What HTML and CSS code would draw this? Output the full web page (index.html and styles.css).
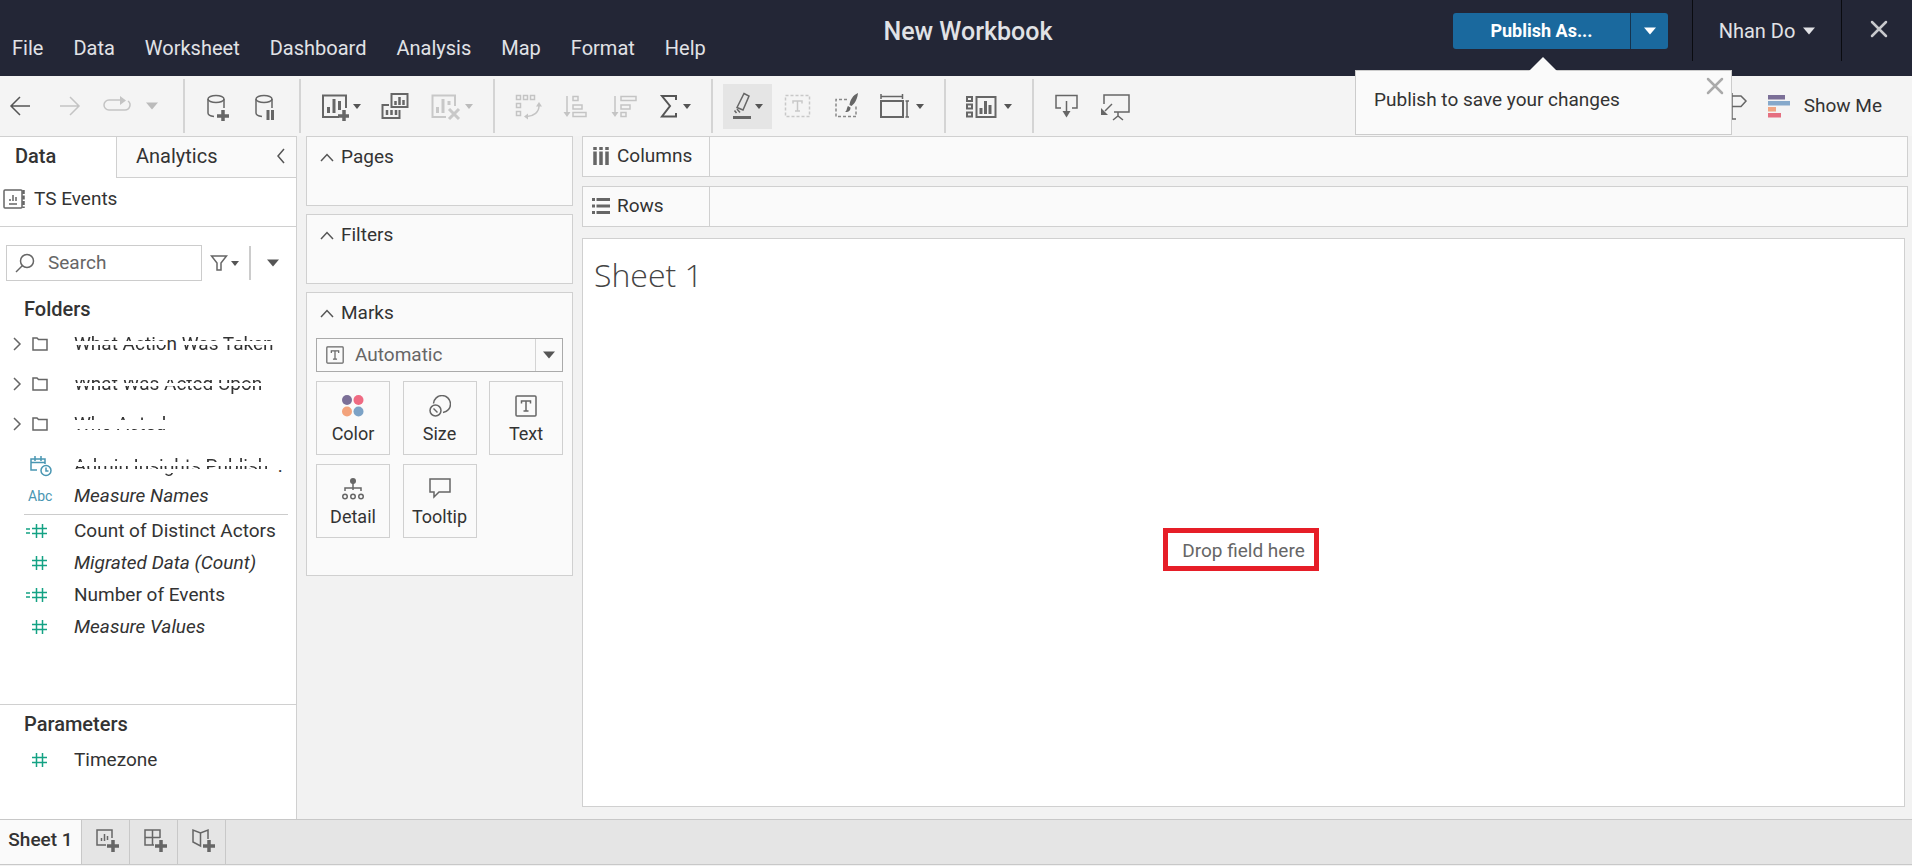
FILE: index.html
```html
<!DOCTYPE html>
<html lang="en">
<head>
<meta charset="utf-8">
<title>New Workbook</title>
<link rel="stylesheet" href="styles.css">
</head>
<body>
<svg width="0" height="0" class="defs" aria-hidden="true">
  <symbol id="caret" viewBox="0 0 10 6"><path d="M0 0h10L5 6z" fill="currentColor"/></symbol>
  <symbol id="chev" viewBox="0 0 16 10"><path d="M2 9l6-6.500 6 6.500" fill="none" stroke="#555" stroke-width="1.500"/></symbol>
  <symbol id="right" viewBox="0 0 10 16"><path d="M1 2l6 6-6 6" fill="none" stroke="#666" stroke-width="1.500"/></symbol>
  <symbol id="folder" viewBox="0 0 18 16"><path d="M2 14V2h4l1.500 1.500H16V14z" fill="none" stroke="#666" stroke-width="1.500"/></symbol>
  <symbol id="hash" viewBox="0 0 24 18"><path d="M12.500 2v14M18.500 2v14M8 6.500h15M8 11.500h15" fill="none" stroke="#14a284" stroke-width="1.500"/></symbol>
  <symbol id="eqhash" viewBox="0 0 24 18"><path d="M12.500 2v14M18.500 2v14M8 6.500h15M8 11.500h15M2 7h4M2 11h4" fill="none" stroke="#14a284" stroke-width="1.500"/></symbol>
  <symbol id="plus" viewBox="0 0 12 12"><path d="M6 0v12M0 6h12" stroke="#666" stroke-width="3.500"/></symbol>
  <symbol id="tbox" viewBox="0 0 22 22"><rect x="1" y="1" width="20" height="20" rx="1" fill="none" stroke="#666" stroke-width="1.500"/><path d="M6.500 8.500V6h9v2.500M11 6v10M8.500 16h5" fill="none" stroke="#666" stroke-width="1.500"/></symbol>
</svg>
<header class="top">
  <nav class="menu" aria-label="Main">
    <button>File</button><button>Data</button><button>Worksheet</button><button>Dashboard</button><button>Analysis</button><button>Map</button><button>Format</button><button>Help</button>
  </nav>
  <h1 class="title">New Workbook</h1>
  <div class="account">
    <div class="publish">
      <button class="publish-main">Publish As...</button><button class="publish-more" aria-label="Publish options"><svg width="12" height="8"><use href="#caret"/></svg></button>
      <div class="callout">
        <p>Publish to save your changes</p>
        <button aria-label="Dismiss"><svg width="18" height="18" viewBox="0 0 18 18"><path d="M2 2l14 14M16 2L2 16" stroke="#aaa" stroke-width="2.500" stroke-linecap="round"/></svg></button>
      </div>
    </div>
    <button class="user">Nhan Do<svg width="12" height="8"><use href="#caret"/></svg></button>
    <button class="close" aria-label="Close"><svg width="18" height="18" viewBox="0 0 18 18"><path d="M2 2l14 14M16 2L2 16" stroke="#c8c9cd" stroke-width="2.500" stroke-linecap="round"/></svg></button>
  </div>
</header>

<div class="toolbar" role="toolbar">
  <div class="group history">
    <button aria-label="Undo"><svg width="30" height="30" viewBox="0 0 30 30"><path d="M22 15H4M12 6l-9 9 9 9" fill="none" stroke="#555" stroke-width="1.500"/></svg></button>
    <button disabled aria-label="Redo"><svg width="24" height="30" viewBox="0 0 24 30"><path d="M2 15h18M12 6l9 9-9 9" fill="none" stroke="#c4c4c4" stroke-width="1.500"/></svg></button>
    <button disabled aria-label="Replay" class="split"><svg width="30" height="30" viewBox="0 0 30 30"><path d="M18 9H7a5 5 0 0 0 0 10h16a5 5 0 0 0 3-9" fill="none" stroke="#c4c4c4" stroke-width="1.500"/><path d="M18 5l6 4.500-6 4.500z" fill="#c4c4c4"/></svg><svg width="12" height="8"><use href="#caret"/></svg></button>
  </div>
  <div class="group">
    <button aria-label="New Data Source"><svg width="28" height="30" viewBox="0 0 28 30"><ellipse cx="11" cy="8" rx="8" ry="3.500" fill="none" stroke="#666" stroke-width="1.500"/><path d="M3 8v14c0 1.500 2 3 6 3.500M19 8v9" fill="none" stroke="#666" stroke-width="1.500"/><use href="#plus" x="12" y="19" width="12" height="12"/></svg></button>
    <button aria-label="Pause Auto Updates"><svg width="28" height="30" viewBox="0 0 28 30"><ellipse cx="11" cy="8" rx="8" ry="3.500" fill="none" stroke="#666" stroke-width="1.500"/><path d="M3 8v14c0 1.500 2 3 6 3.500M19 8v9" fill="none" stroke="#666" stroke-width="1.500"/><path d="M15 19v10M19.500 19v10" stroke="#666" stroke-width="3"/></svg></button>
  </div>
  <div class="group wide">
    <button aria-label="New Worksheet"><svg width="28" height="30" viewBox="0 0 28 30"><path d="M25 17V4.500H2V26h16" fill="none" stroke="#666" stroke-width="2"/><path d="M7.500 22v-6M13 22V8M18.500 19v-9" stroke="#666" stroke-width="3"/><use href="#plus" x="17" y="19" width="12" height="12"/></svg><svg width="8" height="5"><use href="#caret"/></svg></button>
    <button aria-label="Duplicate"><svg width="30" height="30" viewBox="0 0 30 30"><path d="M10.500 3h16v13h-16zM8 14H1.500v13h17v-8" fill="none" stroke="#666" stroke-width="2"/><path d="M14.500 14v-4M18.500 14V6M22.500 14V9M6 24v-5M10.500 24v-5M15 24v-5" stroke="#666" stroke-width="2.500"/></svg></button>
    <button disabled aria-label="Clear Sheet"><svg width="30" height="30" viewBox="0 0 30 30"><path d="M24 15V4.500H1.500V26H15" fill="none" stroke="#c8c8c8" stroke-width="2"/><path d="M6.500 22v-6M12 22V8M18 14v-4" stroke="#c8c8c8" stroke-width="3"/><path d="M18 18l10 10M28 18L18 28" stroke="#c8c8c8" stroke-width="3"/></svg><svg width="8" height="5"><use href="#caret"/></svg></button>
  </div>
  <div class="group wide">
    <button disabled aria-label="Swap Rows and Columns"><svg width="28" height="30" viewBox="0 0 28 30" fill="none" stroke="#c4c4c4" stroke-width="1.500"><path d="M1.500 4.500h4v4h-4zM8.500 4.500h4v4h-4zM15.500 4.500h4v4h-4zM1.500 12.500h4v4h-4zM1.500 20.500h4v4h-4z"/><path d="M24 15c0 6-5 10-12 10.500"/><path d="M21 15.500l3-4.500 3 4.500zM13 22.500L9 25.500l4 3z" fill="#c4c4c4" stroke="none"/></svg></button>
    <button disabled aria-label="Sort Ascending"><svg width="28" height="30" viewBox="0 0 28 30" fill="none" stroke="#c4c4c4" stroke-width="1.500"><path d="M4 5v18M10 5.500h5v4h-5zM10 14h9v4h-9zM10 21.500h13v4H10z"/><path d="M.5 21h7L4 26z" fill="#c4c4c4" stroke="none"/></svg></button>
    <button disabled aria-label="Sort Descending"><svg width="28" height="30" viewBox="0 0 28 30" fill="none" stroke="#c4c4c4" stroke-width="1.500"><path d="M4 5v18M10 5.500h15v4H10zM10 14h9v4h-9zM10 21.500h5v4h-5z"/><path d="M.5 21h7L4 26z" fill="#c4c4c4" stroke="none"/></svg></button>
    <button aria-label="Totals"><svg width="20" height="30" viewBox="0 0 20 30"><path d="M17 9V5H3l8 10-8 10.500h14V22" fill="none" stroke="#555" stroke-width="2"/></svg><svg width="8" height="5"><use href="#caret"/></svg></button>
  </div>
  <div class="group tight">
    <button aria-label="Highlight" class="active"><svg width="22" height="30" viewBox="0 0 22 30"><path d="M11 2.500l5 2.500-6 14-6-2.500z" fill="none" stroke="#666" stroke-width="1.500"/><path d="M4 18l3 3.500M1.500 19.500l2 2.500" stroke="#666" stroke-width="1.500"/><path d="M0 26.500h18" stroke="#666" stroke-width="3"/></svg><svg width="8" height="5"><use href="#caret"/></svg></button>
    <button disabled aria-label="Show Mark Labels"><svg width="28" height="30" viewBox="0 0 28 30" fill="none" stroke="#c8c8c8" stroke-width="1.500"><rect x="1.500" y="4.500" width="24" height="21" stroke-dasharray="3 2"/><path d="M9 12.500V10h9v2.500M13.500 10v10M11 20h5"/></svg></button>
    <button aria-label="Format Workbook"><svg width="28" height="30" viewBox="0 0 28 30"><path d="M15 8.500H4v17h20V14" fill="none" stroke="#888" stroke-width="1.500" stroke-dasharray="3 2"/><path d="M26 2c-5 2-8 7-8.500 12l2 1c4-3 6-8 6.500-13zM16 15l2.500 1.500c0 4-3 5-5.500 4.500 2-1 1.500-4 3-6z" fill="#666"/></svg></button>
    <button aria-label="Fit"><svg width="32" height="30" viewBox="0 0 32 30" fill="none" stroke="#666" stroke-width="1.500"><path d="M1 10h22v16H1z" stroke-width="2"/><path d="M1 5.500h22M1 3v5M22.500 3v5M27 10.500v15M25.500 10H29M25.500 26H29"/></svg><svg width="8" height="5"><use href="#caret"/></svg></button>
  </div>
  <div class="group wide">
    <button aria-label="Show Cards"><svg width="34" height="30" viewBox="0 0 34 30"><path d="M1 6h5v4H1zM1 13.500h5v4H1zM1 21.500h5v4H1zM10.500 6h19v20h-19z" fill="none" stroke="#666" stroke-width="2"/><path d="M15 23v-6M19.500 23V10M24 23v-9" stroke="#666" stroke-width="3"/></svg><svg width="8" height="5"><use href="#caret"/></svg></button>
  </div>
  <div class="group last wide">
    <button aria-label="Download"><svg width="26" height="30" viewBox="0 0 26 30"><path d="M7 17H2V4.500h21V17h-5" fill="none" stroke="#666" stroke-width="1.500"/><path d="M12.500 10v11" stroke="#666" stroke-width="1.500"/><path d="M8.500 20h8l-4 6.500z" fill="#666"/></svg></button>
    <button aria-label="Present"><svg width="30" height="30" viewBox="0 0 30 30"><path d="M4 13V4h25v17H14M13 29l5-4 5 4M18 21v4" fill="none" stroke="#666" stroke-width="1.500"/><path d="M12 13l-7 7" stroke="#666" stroke-width="1.500"/><path d="M1 17v7h7z" fill="#666"/></svg></button>
  </div>
  <div class="group end">
    <button aria-label="Data Guide"><svg width="22" height="30" viewBox="0 0 22 30"><path d="M6 2v26M3 28h7M6 5h9l5 5-5 5.500H6" fill="none" stroke="#666" stroke-width="1.500"/></svg></button>
    <button class="showme"><svg width="24" height="26" viewBox="0 0 24 26"><path d="M0 2h17v4.500H0z" fill="#7b6f97"/><path d="M0 8h22v4.500H0z" fill="#86a9cb"/><path d="M0 14h8v4.500H0z" fill="#f1a583"/><path d="M0 20h13v4.500H0z" fill="#e56f80"/></svg>Show Me</button>
  </div>
</div>

<main class="work">
  <aside class="data">
    <div class="tabs"><button class="on">Data</button><button>Analytics<svg width="10" height="16" viewBox="0 0 10 16"><path d="M8 1L2 8l6 7" fill="none" stroke="#555" stroke-width="1.500"/></svg></button></div>
    <div class="source"><svg width="24" height="22" viewBox="0 0 24 22"><rect x="2" y="2" width="18" height="18" rx="1" fill="none" stroke="#666" stroke-width="1.500"/><path d="M21.500 2v18" stroke="#666" stroke-width="2.500" stroke-dasharray="4 1.500"/><path d="M8 13v-2M11 13V7M14 13V9M7 16h8" stroke="#666" stroke-width="1.500"/></svg>TS Events</div>
    <div class="find">
      <label class="search"><svg width="20" height="20" viewBox="0 0 20 20"><circle cx="12" cy="8" r="6.500" fill="none" stroke="#666" stroke-width="1.500"/><path d="M7.500 12.500L1 19" stroke="#666" stroke-width="1.500"/></svg><input type="text" placeholder="Search" aria-label="Search"></label>
      <button class="filter" aria-label="Filter"><svg width="18" height="18" viewBox="0 0 18 18"><path d="M1.500 2h15L11 9v7H7V9z" fill="none" stroke="#666" stroke-width="1.500"/></svg><svg width="8" height="5"><use href="#caret"/></svg></button>
      <button class="more" aria-label="More"><svg width="12" height="8"><use href="#caret"/></svg></button>
    </div>
    <h2>Folders</h2>
    <ul class="folders">
      <li><svg width="10" height="16"><use href="#right"/></svg><svg width="18" height="16"><use href="#folder"/></svg><span class="name"><span class="cut cut-a">What Actio</span>n<span class="cut cut-b"> Was Taken</span></span></li>
      <li><svg width="10" height="16"><use href="#right"/></svg><svg width="18" height="16"><use href="#folder"/></svg><span class="name cut cut-c">What Was Acted Upon</span></li>
      <li><svg width="10" height="16"><use href="#right"/></svg><svg width="18" height="16"><use href="#folder"/></svg><span class="name cut cut-d">Who Acted</span></li>
    </ul>
    <ul class="fields dims">
      <li class="first"><svg width="24" height="22" viewBox="0 0 24 22" fill="none" stroke="#4996b2" stroke-width="1.500"><path d="M9 15H3V4h14v5M3 7.500h14M7 1v5M13 1v5"/><circle cx="18" cy="15.500" r="5"/><path d="M18 12.500v3.500h2.500"/></svg><span><span class="cut cut-e">Admin Insights Publish</span> &nbsp;.</span></li>
      <li class="i names"><span class="abc">Abc</span>Measure Names</li>
    </ul>
    <ul class="fields measures">
      <li><svg width="24" height="18"><use href="#eqhash"/></svg>Count of Distinct Actors</li>
      <li class="i"><svg width="24" height="18"><use href="#hash"/></svg>Migrated Data (Count)</li>
      <li><svg width="24" height="18"><use href="#eqhash"/></svg>Number of Events</li>
      <li class="i"><svg width="24" height="18"><use href="#hash"/></svg>Measure Values</li>
    </ul>
    <section class="params">
      <h2>Parameters</h2>
      <ul class="fields"><li><svg width="24" height="18"><use href="#hash"/></svg>Timezone</li></ul>
    </section>
  </aside>

  <div class="cards">
    <section class="card"><h3><svg width="16" height="10"><use href="#chev"/></svg>Pages</h3></section>
    <section class="card"><h3><svg width="16" height="10"><use href="#chev"/></svg>Filters</h3></section>
    <section class="card marks">
      <h3><svg width="16" height="10"><use href="#chev"/></svg>Marks</h3>
      <div class="type"><svg width="18" height="18"><use href="#tbox"/></svg><select aria-label="Mark type"><option>Automatic</option></select><span class="drop"><svg width="12" height="8"><use href="#caret"/></svg></span></div>
      <div class="props">
        <button><svg width="22" height="22" viewBox="0 0 22 22"><circle cx="5" cy="5" r="5" fill="#7b6f97"/><circle cx="16.500" cy="5" r="5" fill="#ef6a82"/><circle cx="5" cy="16.500" r="5" fill="#f3a37c"/><circle cx="16.500" cy="16.500" r="5" fill="#7ca2c6"/></svg>Color</button>
        <button><svg width="22" height="22" viewBox="0 0 22 22" fill="none" stroke="#666" stroke-width="1.500"><path d="M4.500 8.500a8.500 8.500 0 1 1 9.500 9"/><circle cx="6.500" cy="15.500" r="5.500"/><path d="M4.500 13.500l4 4"/></svg>Size</button>
        <button><svg width="22" height="22"><use href="#tbox"/></svg>Text</button>
        <button><svg width="22" height="22" viewBox="0 0 22 22" fill="none" stroke="#666" stroke-width="1.500"><circle cx="11" cy="3" r="3" fill="#666" stroke="none"/><path d="M11 5v7M3 13v-3h16v3"/><circle cx="3" cy="18.500" r="2.250"/><circle cx="11" cy="18.500" r="2.250"/><circle cx="19" cy="18.500" r="2.250"/></svg>Detail</button>
        <button><svg width="22" height="22" viewBox="0 0 22 22"><path d="M1 1h20v13h-11l-5 5v-5H1z" fill="none" stroke="#666" stroke-width="1.500"/></svg>Tooltip</button>
      </div>
    </section>
  </div>

  <div class="canvas">
    <div class="shelf"><div class="shelf-name"><svg width="18" height="20" viewBox="0 0 18 20"><path d="M3 1v3M9 1v3M15 1v3M3 5.500V19M9 5.500V19M15 5.500V19" stroke="#666" stroke-width="3.500"/></svg>Columns</div></div>
    <div class="shelf"><div class="shelf-name"><svg width="18" height="20" viewBox="0 0 18 20"><path d="M0 3.500h3M0 10h3M0 16.500h3M4.500 3.500H18M4.500 10H18M4.500 16.500H18" stroke="#666" stroke-width="3"/></svg>Rows</div></div>
    <section class="view">
      <h2>Sheet 1</h2>
      <div class="dropzone"><span>Drop field here</span></div>
    </section>
  </div>
</main>

<footer class="sheets">
  <button class="current">Sheet 1</button>
  <button aria-label="New Worksheet"><svg width="24" height="24" viewBox="0 0 24 24"><path d="M17 10V2H2v15h9" fill="none" stroke="#666" stroke-width="1.500"/><path d="M6.500 13v-3M9.500 13V6M12.500 12V8" stroke="#666" stroke-width="1.500"/><use href="#plus" x="12" y="12" width="12" height="12"/></svg></button>
  <button aria-label="New Dashboard"><svg width="24" height="24" viewBox="0 0 24 24"><path d="M17 10V2H2v15h9M2 9.500h15M9.500 2v15" fill="none" stroke="#666" stroke-width="1.500"/><use href="#plus" x="12" y="12" width="12" height="12"/></svg></button>
  <button aria-label="New Story"><svg width="24" height="24" viewBox="0 0 24 24"><path d="M17 11V2L9.500 5 2 2v12l7.500 4V5" fill="none" stroke="#666" stroke-width="1.500"/><use href="#plus" x="12" y="12" width="12" height="12"/></svg></button>
</footer>
</body>
</html>
```
FILE: styles.css
```css
* { box-sizing: border-box; margin: 0; padding: 0; }
body {
  display: flex;
  flex-direction: column;
  min-height: 100vh;
  padding-bottom: 1px;
  background: #f2f2f2;
  color: #333;
  font: 19px/24px Roboto, "Liberation Sans", sans-serif;
}
button, input, select { font: inherit; color: inherit; background: none; border: 0; }
button { display: flex; align-items: center; }
svg { flex: none; display: block; }
ul { list-style: none; }
.defs { position: absolute; }

.top {
  display: grid;
  grid-template-columns: 1fr auto 1fr;
  column-gap: 24px;
  height: 76px;
  background: #232636;
  color: #e1e2e6;
}
.menu { display: flex; align-items: flex-end; gap: 30px; padding: 0 0 16px 12px; font-size: 20px; }
.title { padding: 18px 0 0 24px; font-size: 25px; line-height: 28px; font-weight: 500; }
.account { display: flex; justify-content: flex-end; align-items: flex-start; }
.publish { position: relative; display: flex; margin: 13px 24px 0 0; }
.publish button { color: #fff; background: #1a699e; }
.publish .publish-main {
  width: 178px;
  height: 36px;
  justify-content: center;
  border-radius: 3px 0 0 3px;
  border-right: 1px solid #15344f;
  font-size: 18px;
  font-weight: 700;
}
.publish .publish-more { width: 37px; height: 36px; justify-content: center; border-radius: 0 3px 3px 0; }
.callout {
  position: absolute;
  z-index: 2;
  top: 57px;
  right: -64px;
  width: 377px;
  height: 65px;
  display: flex;
  justify-content: space-between;
  padding: 6px 7px 11px 18px;
  background: #fafafa;
  border: 1px solid #ccc;
  color: #333;
}
.callout::before {
  content: "";
  position: absolute;
  left: 173px;
  top: -14px;
  border: 14px solid transparent;
  border-top: 0;
  border-bottom-color: #fafafa;
}
.callout p { align-self: center; }
.publish .callout button { align-self: flex-start; background: none; }
.user { gap: 8px; height: 61px; width: 149px; justify-content: center; border-left: 1px solid #0a0b10; font-size: 20px; }
.close { height: 61px; width: 71px; padding: 0 0 4px 28px; border-left: 1px solid #0a0b10; }

.toolbar { display: flex; align-items: center; height: 60px; background: #f4f4f4; color: #555; }
.group { display: flex; align-items: center; gap: 20px; height: 54px; padding: 0 18px 0 20px; border-right: 2px solid #d4d4d4; }
.group button { gap: 4px; height: 45px; }
.group button:disabled { color: #bbb; }
.wide { padding: 0 20px; }
.history { padding: 0 25px 0 8px; }
.group .split { gap: 14px; }
.tight { padding: 0 20px 0 10px; }
.tight .active { width: 49px; margin-right: -8px; padding-left: 10px; gap: 0; background: #e5e5e5; }
.last, .end { border: 0; }
.end { margin-left: auto; padding-right: 30px; }
.group .showme { gap: 12px; color: #333; }

.work { flex: 1; display: grid; grid-template-columns: 297px 267px 1fr; column-gap: 9px; }
.data { display: flex; flex-direction: column; background: #fff; border: 1px solid #d0d0d0; border-width: 1px 1px 0 0; }
.tabs { display: grid; grid-template-columns: 116px 1fr; height: 41px; font-size: 20px; }
.tabs button { justify-content: space-between; padding: 0 10px 2px 19px; background: #fafafa; border: 1px solid #d0d0d0; border-width: 0 0 1px 1px; }
.tabs .on { padding: 0 0 3px 15px; font-weight: 500; background: #fff; border: 0; }
.source { display: flex; align-items: center; gap: 8px; height: 49px; padding: 0 0 6px 2px; border-bottom: 1px solid #d0d0d0; }
.find { display: flex; align-items: center; height: 36px; margin: 18px 12px 14px 6px; color: #555; }
.search { display: flex; align-items: center; gap: 13px; width: 196px; height: 36px; padding-left: 8px; border: 1px solid #ccc; }
.search input { width: 140px; outline: 0; }
.search input::placeholder { color: #666; opacity: 1; }
.filter { gap: 3px; height: 34px; width: 49px; padding-left: 8px; border-right: 2px solid #ccc; }
.more { margin-left: 16px; }
h2 { padding-left: 24px; font-size: 20px; line-height: 28px; font-weight: 500; }
.folders { padding: 1px 0 6px 13px; }
.folders li { display: flex; align-items: center; height: 40px; gap: 8px; }
.folders .name { margin-left: 17px; white-space: pre; }
.cut-a, .cut-b { -webkit-mask-image: linear-gradient(#000 9px, transparent 9px 13px, #000 13px); mask-image: linear-gradient(#000 9px, transparent 9px 13px, #000 13px); }
.cut-c { -webkit-mask-image: linear-gradient(transparent 8px, #000 8px 11px, transparent 11px 14px, #000 14px); mask-image: linear-gradient(transparent 8px, #000 8px 11px, transparent 11px 14px, #000 14px); }
.cut-d { -webkit-mask-image: linear-gradient(#000 8px, transparent 8px 17px, #000 17px); mask-image: linear-gradient(#000 8px, transparent 8px 17px, #000 17px); }
.cut-e { -webkit-mask-image: linear-gradient(#000 8px, transparent 8px 12px, #000 12px 15px, transparent 15px 19px, #000 19px); mask-image: linear-gradient(#000 8px, transparent 8px 12px, #000 12px 15px, transparent 15px 19px, #000 19px); }
.fields li { display: flex; align-items: center; gap: 26px; height: 32px; padding-left: 24px; white-space: nowrap; }
.fields .i { font-style: italic; }
.dims li { padding-left: 28px; gap: 22px; }
.dims .names { height: 28px; }
.abc { width: 24px; color: #4996b2; font-size: 14px; font-style: normal; }
.dims { margin-right: 8px; padding-bottom: 4px; }
.measures { margin: 0 8px 0 24px; border-top: 1px solid #ccc; }
.measures li { padding-left: 0; }
.params { margin-top: auto; height: 115px; padding-top: 5px; border-top: 1px solid #d0d0d0; }
.params h2 { margin-bottom: 6px; }

.cards { display: flex; flex-direction: column; gap: 8px; }
.card { min-height: 70px; background: #fafafa; border: 1px solid #d0d0d0; }
.card h3 { display: flex; align-items: center; gap: 6px; height: 39px; padding-left: 12px; font-size: inherit; font-weight: 400; }
.marks { height: 284px; padding: 0 9px; }
.marks h3 { padding-left: 3px; }
.type { display: flex; align-items: center; height: 34px; margin: 6px 0 9px; border: 1px solid #aaa; color: #666; padding-left: 9px; }
.type select { flex: 1; align-self: stretch; padding-left: 11px; appearance: none; outline: 0; }
.drop { display: flex; align-items: center; justify-content: center; width: 27px; height: 32px; border-left: 1px solid #d4d4d4; color: #555; }
.props { display: grid; grid-template-columns: repeat(3, 74px); justify-content: space-between; row-gap: 9px; }
.props button { flex-direction: column; justify-content: center; gap: 5px; height: 74px; padding-top: 4px; border: 1px solid #d0d0d0; font-size: 18px; }

.canvas { display: flex; flex-direction: column; margin-right: 4px; }
.shelf { height: 41px; margin-bottom: 9px; background: #fafafa; border: 1px solid #d0d0d0; }
.shelf-name { display: flex; align-items: center; gap: 7px; width: 127px; height: 39px; padding: 0 0 2px 9px; border-right: 1px solid #d0d0d0; }
.view { flex: 1; display: flex; flex-direction: column; margin: 2px 3px 12px 0; background: #fff; border: 1px solid #d0d0d0; }
.view h2 { padding: 16px 0 0 11px; color: #444; font: 300 32px/40px "Open Sans", Roboto, sans-serif; }
.dropzone { flex: 1; display: flex; align-items: center; justify-content: center; padding: 0 5px 2px 0; color: #666; }
.dropzone span { padding: 6px 9px 3px 14px; border: 5px solid #e61e28; line-height: 24px; }

.sheets { display: flex; height: 46px; background: #e5e5e5; border: 1px solid #c8c8c8; border-width: 1px 0; }
.sheets button { width: 48px; justify-content: center; padding: 0 0 5px 2px; border-right: 1px solid #c8c8c8; }
.sheets .current { width: 82px; padding-left: 0; background: #fafafa; font-weight: 500; }
```
